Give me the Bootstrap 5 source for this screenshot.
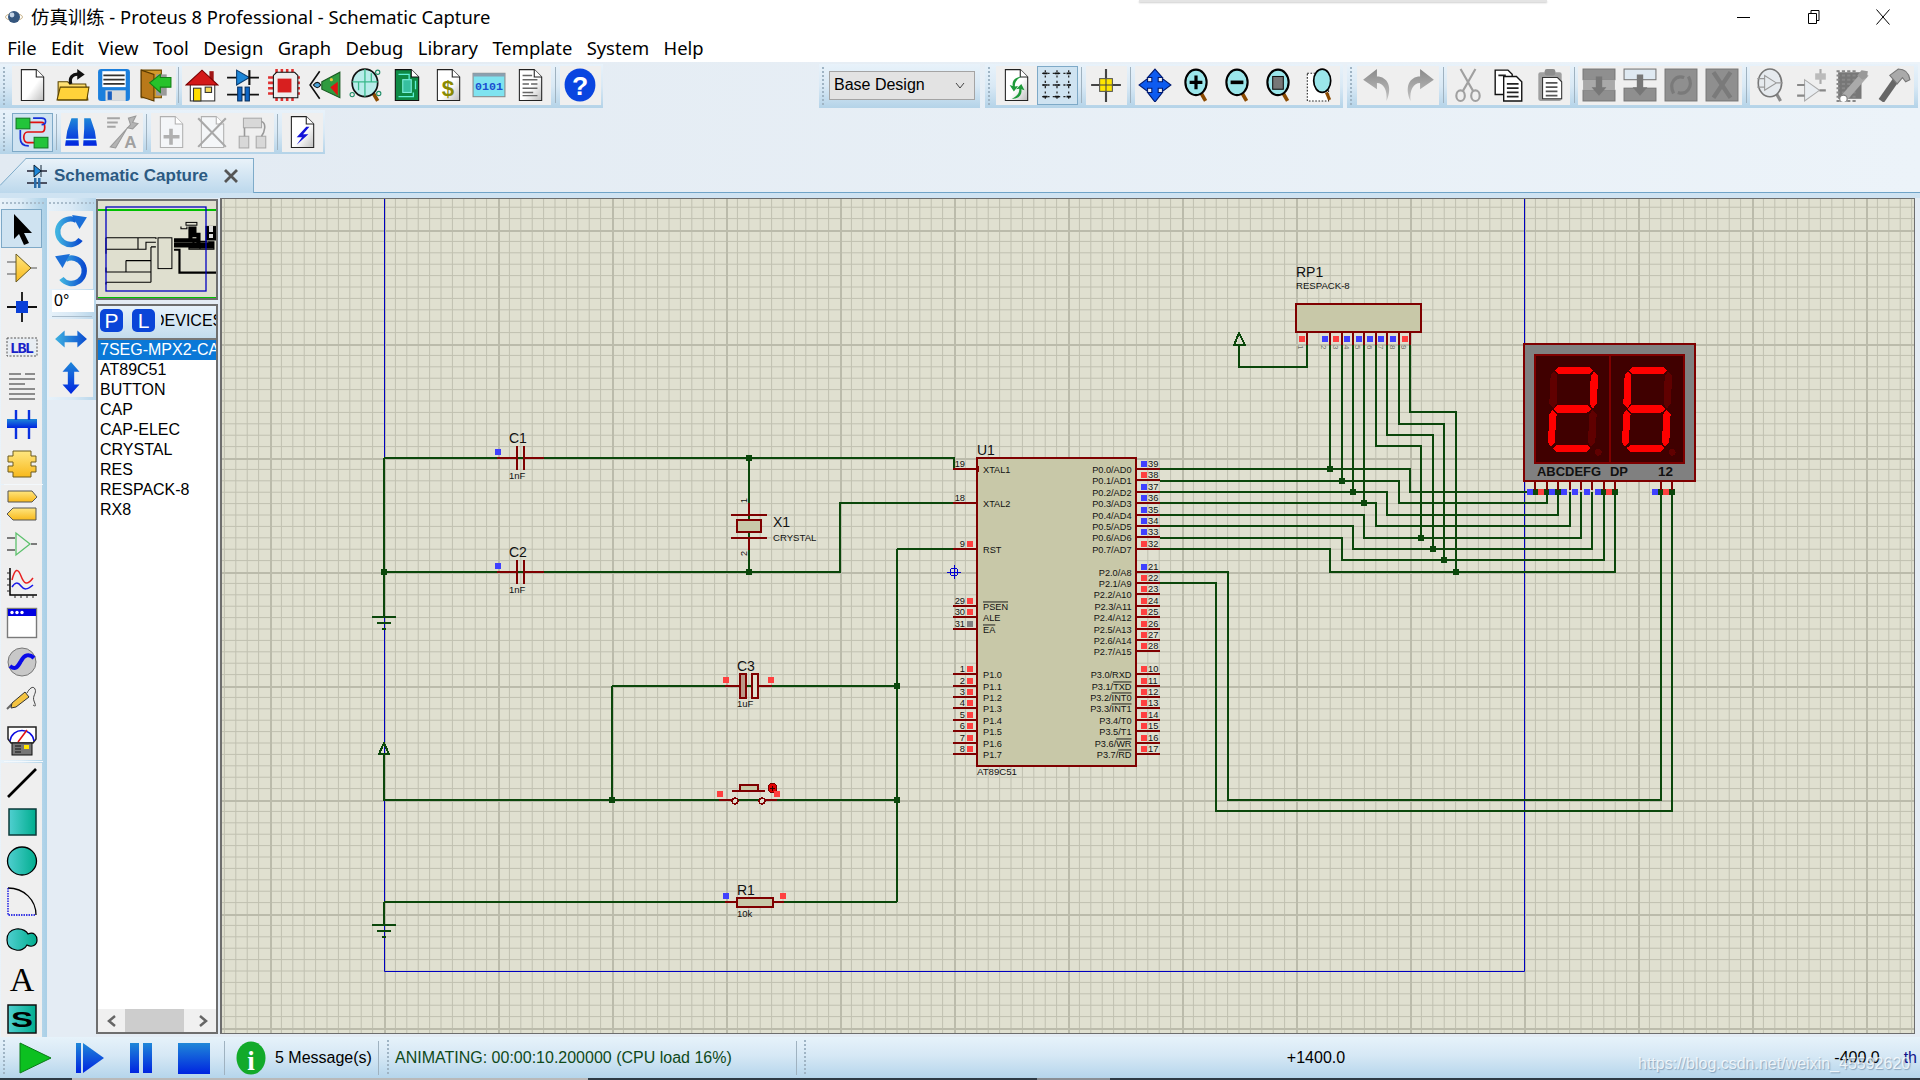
<!DOCTYPE html>
<html lang="en">
<head>
  <meta charset="utf-8" />
  <title>仿真训练 - Proteus 8 Professional - Schematic Capture</title>
  <link href="https://cdn.jsdelivr.net/npm/bootstrap@5.3.2/dist/css/bootstrap.min.css" rel="stylesheet" />
  <style>
    html, body { height: 100%; overflow: hidden; }
    body { font-family: "Liberation Sans", "Noto Sans CJK SC", sans-serif; font-size: 16px; color: #000; background: #e4ecf4; position: relative; }
    .gloss { position: absolute; width: 0; height: 0; }

    .title-bar { height: 34px; background: #fff; padding-left: 5px; }
    .title-text { font-family: "Noto Sans", "Noto Sans CJK SC", sans-serif; font-size: 18.4px; margin-left: 8px; white-space: nowrap; }
    .win-ctl { width: 70px; height: 34px; }
    .win-group { padding-right: 2px; }
    .top-shadow { position: absolute; left: 1139px; top: 0; width: 408px; height: 2px; background: #e4e4e4; box-shadow: 0 1px 2px #ccc; }

    .menu-bar { height: 28px; background: #fff; padding-left: 0; }
    .menu-bar .nav-link { font-family: "Noto Sans", sans-serif; font-size: 18.4px; color: #000; padding: 0 7.2px; line-height: 28px; }

    .bars { height: 136px; background: linear-gradient(90deg, #e2eaf2, #ecf3f9); }
    .bar-row-a { height: 48px; padding-top: 2px; }
    .bar-row-a .tbar { padding-bottom: 2px; }
    .bar-row-b { height: 44px; }
    .tbar { height: 44px; padding-left: 11.5px; position: relative; background: linear-gradient(#e8f2fa, #d9e9f5 50%, #b4d3e8); }
    .tbar::before { content: ""; position: absolute; left: 3px; top: 3px; bottom: 3px; width: 2px; background: repeating-linear-gradient(#9fb4c4 0 2px, transparent 2px 4px); }
    #tb1 { width: 603px; }
    #tb1 .tsep { width: 6px; }
    #tb1 .tsep:last-of-type { width: 9px; }
    #tb2 { width: 325px; }
    #tb3 { width: 161px; margin-left: 216px; padding-left: 10px; }
    #tb4 { width: 358px; margin-left: 5px; padding-left: 10.5px; }
    #tb5 { width: 571px; margin-left: 4px; padding-left: 10px; }
    .tool { width: 41px; height: 39px; padding: 0; border: 1px solid transparent; border-radius: 0; display: flex; align-items: center; justify-content: center; flex-shrink: 0; }
    .tool.on { background: #cfe3f1; border-color: #7ea9c7; }
    .tsep { width: 8px; height: 36px; display: flex; justify-content: center; }
    .tsep::after { content: ""; width: 1px; background: #9fb2c0; }
    .ic { width: 34px; height: 34px; display: block; }
    .layer-pick { width: 146px; height: 29px; background: #e3e3e3; border: 1px solid #a4a4a4; border-radius: 0; font-size: 16px; color: #000; padding: 0 26px 0 4px; --bs-form-select-bg-img: none; background-image: url("data:image/svg+xml,%3Csvg xmlns='http://www.w3.org/2000/svg' width='10' height='7'%3E%3Cpath d='M1 1l4 5 4-5' fill='none' stroke='%23444'/%3E%3C/svg%3E"); background-repeat: no-repeat; background-position: right 9px center; background-size: 10px 7px; }

    .tab-row { height: 44px; position: relative; }
    .tab-line { position: absolute; left: 0; right: 0; bottom: 0; height: 6px; background: #cfe3f2; border-top: 1px solid #6fa3c7; }
    .sheet-tab { position: absolute; left: 0; top: 4px; width: 254px; height: 35px; padding-left: 26px; background: linear-gradient(#e9f2f9, #bcd8ec); border-top: 1px solid #7eabc9; border-right: 1px solid #7eabc9; clip-path: polygon(26px 0, 100% 0, 100% 100%, 0 100%, 0 27px); }
    .tab-slant { position: absolute; left: 0; top: 4px; }
    .tab-name { font-weight: 700; font-size: 17px; color: #2c5a82; margin-left: 6px; white-space: nowrap; }

    .work { height: 839px; }
    .strip { width: 47px; background: linear-gradient(90deg, #e9f3fa, #dcebf6 45%, #a9cfe6); padding-top: 11px; position: relative; }
    .strip::before, .strip-two::before { content: ""; position: absolute; left: 2px; right: 2px; top: 4px; height: 2px; background: repeating-linear-gradient(90deg, #a9bccb 0 2px, transparent 2px 4px); }
    .strip .tool { width: 41px; height: 39.3px; margin-left: 1px; }
    .strip .ic { width: 32px; height: 32px; }
    .strip-sep { height: 1px; background: #f3f8fc; margin: 0 4px; }
    .strip-gap { margin: 1px 4px; }
    .strip-two { width: 49px; height: 202px; background: linear-gradient(90deg, #e7f2fa, #d9e9f5 50%, #b8d6ea); padding-top: 13px; position: relative; }
    .strip-two .tool { width: 44px; height: 39px; margin-left: 2px; }
    .angle { width: 42px; height: 22px; margin: 1px 0 4px 5px; background: #fff; line-height: 22px; padding-left: 2px; font-size: 16px; }
    .strip-two .strip-sep { background: #a9bccb; margin: 0 4px 2px 5px; }

    .dev-col { width: 122px; }
    .overview { height: 101px; border: 2px solid #6e6e6e; background: #dfdfcf; margin-top: 1px; overflow: hidden; }
    .overview svg { display: block; }
    .picker { height: 730px; margin-top: 4px; border: 2px solid #6e6e6e; background: #fff; }
    .picker-head { height: 32px; background: linear-gradient(#e7f2fa, #c3dced); padding: 3px 0 0 2px; overflow: hidden; }
    .pick-btn { width: 23px; height: 23px; padding: 0; flex-shrink: 0; background: #0a45d8; color: #fff; border: 0; border-radius: 5px; font-size: 21px; line-height: 23px; margin-right: 9px; --bs-btn-bg: #0a45d8; }
    .pick-clip { width: 56px; overflow: hidden; flex-shrink: 0; margin-left: -3px; }
    .pick-label { font-size: 16px; margin-left: -8px; white-space: nowrap; display: block; }
    .picker .list-group { --bs-list-group-border-width: 0; --bs-list-group-bg: transparent; border-top: 2px solid #777; border-radius: 0; }
    .picker .list-group-item { padding: 0 0 0 2px; height: 20px; line-height: 20px; font-size: 16px; color: #000; white-space: nowrap; overflow: hidden; background: transparent; }
    .picker .list-group-item.active { background: #0a78d7; color: #fff; }
    .hscroll { height: 23px; background: #f0f0f0; }
    .hscroll-thumb { width: 59px; height: 23px; background: #cdcdcd; }
    .hscroll-arrow { width: 27px; height: 23px; }

    .canvas-box { margin-left: 2px; width: 1695px; height: 836px; border: 2px solid #6e6e6e; border-right-width: 1px; border-top-width: 1px; }
    #sch { display: block; width: 1692px; height: 834px; font-family: "Liberation Sans", sans-serif; }
    #sch text { fill: #111; }
    #art { shape-rendering: crispEdges; }
    .ovl { text-decoration: overline; }

    .status { height: 41px; padding-top: 1px; background: linear-gradient(#e6f2fa, #d6e8f5 45%, #b5d5eb); position: relative; }
    .status-grip { width: 2px; height: 36px; background: repeating-linear-gradient(#9fb4c4 0 2px, transparent 2px 4px); flex-shrink: 0; }
    .grip-a { margin-left: 3px; }
    .grip-b { margin-left: 8px; }
    .grip-c { margin-left: 7px; }
    .run-btn { width: 52.5px; height: 40px; padding: 0; display: flex; align-items: center; justify-content: center; border: 0; }
    .run-first { margin-left: 5px; }
    .stat-sep { width: 1px; height: 34px; background: #9fb2c0; flex-shrink: 0; }
    .info-mark { margin-left: 11px; }
    .msg { width: 112px; padding-left: 9px; white-space: nowrap; }
    .anim { color: #0f4a1a; width: 407px; padding-left: 6px; white-space: nowrap; }
    .cell-x { width: 1020px; text-align: center; }
    .cell-y { width: 62px; text-align: center; }
    .cell-u { flex-grow: 1; color: #11118a; text-align: right; padding-right: 3px; }
    .water { position: absolute; left: 1638px; top: 15px; color: rgba(255, 255, 255, .78); text-shadow: 1px 1px 1px rgba(90, 120, 150, .55); white-space: nowrap; }
    .task-strip { height: 2px; background: linear-gradient(90deg, #2e3a44 72px, #b9b9b9 72px, #b9b9b9 588px, #2e3a44 588px, #2e3a44 1037px, #8a8f94 1037px, #8a8f94 1110px, #2e3a44 1110px); }
  </style>
</head>
<body>
  <svg class="gloss" aria-hidden="true">
    <defs>
      <linearGradient id="gPage" x1="0" y1="0" x2="1" y2="1"><stop offset=".55" stop-color="#fff"/><stop offset="1" stop-color="#bdbdbd"/></linearGradient>
      <linearGradient id="gGold" x1="0" y1="0" x2="0" y2="1"><stop offset="0" stop-color="#ffe680"/><stop offset="1" stop-color="#f8b91c"/></linearGradient>
      <linearGradient id="gBlue" x1="0" y1="0" x2="0" y2="1"><stop offset="0" stop-color="#1f87d8"/><stop offset="1" stop-color="#0024e0"/></linearGradient>
      <linearGradient id="gSky" x1="0" y1="0" x2="1" y2="0"><stop offset="0" stop-color="#3fb2e0"/><stop offset="1" stop-color="#0a4bd0"/></linearGradient>
      <linearGradient id="gTeal" x1="0" y1="0" x2="1" y2="0"><stop offset="0" stop-color="#50cfd0"/><stop offset="1" stop-color="#00ad8e"/></linearGradient>
      <linearGradient id="gGrey" x1="0" y1="0" x2="0" y2="1"><stop offset="0" stop-color="#8a8a8a"/><stop offset="1" stop-color="#c4c4c4"/></linearGradient>
      <symbol id="pg" viewBox="0 0 32 32"><path d="M6 1.5h14l7 7v22H6z" fill="url(#gPage)" stroke="#222"/><path d="M20 1.5v7h7" fill="#fff" stroke="#222"/></symbol>
      <symbol id="pgoff" viewBox="0 0 32 32"><path d="M6 1.5h14l7 7v22H6z" fill="#f4f6f8" stroke="#b0b0b0"/><path d="M20 1.5v7h7" fill="#fff" stroke="#b0b0b0"/></symbol>
      <symbol id="mg" viewBox="0 0 32 32"><path d="M21 24l4 7" stroke="#8a4a00" stroke-width="3.4"/><ellipse cx="16" cy="13.5" rx="10" ry="12" fill="#9be6ea" stroke="#000" stroke-width="2"/></symbol>
    </defs>
  </svg>

  <div class="top-shadow"></div>

  <header class="title-bar d-flex align-items-center">
    <svg width="18" height="20" viewBox="0 0 18 20"><ellipse cx="9" cy="10" rx="8.5" ry="3.5" fill="none" stroke="#c9b48a"/><circle cx="9" cy="10" r="6" fill="#35567e"/><circle cx="7" cy="8" r="2.4" fill="#c4d4e6"/></svg>
    <span class="title-text">仿真训练 - Proteus 8 Professional - Schematic Capture</span>
    <div class="ms-auto d-flex align-items-center win-group">
      <div class="win-ctl d-flex align-items-center justify-content-center"><svg width="16" height="16" viewBox="0 0 16 16"><path d="M2 8.5h13" stroke="#000"/></svg></div>
      <div class="win-ctl d-flex align-items-center justify-content-center"><svg width="16" height="16" viewBox="0 0 16 16"><path d="M3.5 4.500h8v10h-8zM6 4.500V1.500h8v10h-2.500" fill="none" stroke="#000"/></svg></div>
      <div class="win-ctl d-flex align-items-center justify-content-center"><svg width="16" height="16" viewBox="0 0 16 16"><path d="M1.500 .5l13 15M14.500 .5l-13 15" stroke="#000"/></svg></div>
    </div>
  </header>

  <nav class="menu-bar nav">
    <a class="nav-link" href="#">File</a>
    <a class="nav-link" href="#">Edit</a>
    <a class="nav-link" href="#">View</a>
    <a class="nav-link" href="#">Tool</a>
    <a class="nav-link" href="#">Design</a>
    <a class="nav-link" href="#">Graph</a>
    <a class="nav-link" href="#">Debug</a>
    <a class="nav-link" href="#">Library</a>
    <a class="nav-link" href="#">Template</a>
    <a class="nav-link" href="#">System</a>
    <a class="nav-link" href="#">Help</a>
  </nav>

  <div class="bars">
    <div class="bar-row-a d-flex">
      <div class="tbar d-flex align-items-center" id="tb1">
        <button class="tool"><svg class="ic" viewBox="0 0 32 32"><use href="#pg"/></svg></button>
        <button class="tool"><svg class="ic" viewBox="0 0 32 32"><path d="M2 13h9l2 2h15l2 15H2z" fill="url(#gGold)" stroke="#5a4300"/><path d="M1 30l3-12h27l-2 12z" fill="#ffd23a" stroke="#5a4300"/><path d="M14 15c-2-6 2-10 8-9" fill="none" stroke="#111" stroke-width="3"/><path d="M20 1l7 5-7 5z" fill="#111"/></svg></button>
        <button class="tool"><svg class="ic" viewBox="0 0 32 32"><rect x="1" y="1" width="30" height="30" rx="3" fill="#1b7fdd"/><rect x="5" y="3" width="22" height="15" fill="#fff"/><path d="M6 7h20M6 11h20M6 15h20" stroke="#333" stroke-width="1.6"/><rect x="8" y="21" width="19" height="10" fill="#dcdcdc"/><rect x="10" y="22" width="4" height="8" fill="#1b5fc0"/></svg></button>
        <button class="tool"><svg class="ic" viewBox="0 0 32 32"><path d="M3 2h19v26H3z" fill="#d39a2a" stroke="#6e4a00"/><path d="M3 2l12 4v25L3 27z" fill="#b9791a" stroke="#5a3a00"/><rect x="17" y="6" width="10" height="20" fill="#9a9a9a"/><path d="M31 9v9H21v5l-10-9 10-8v3z" fill="#26c22a" stroke="#128014"/></svg></button>
        <span class="tsep"></span>
        <button class="tool"><svg class="ic" viewBox="0 0 32 32"><rect x="5" y="14" width="23" height="17" fill="#fff" stroke="#333"/><rect x="23" y="3" width="4" height="9" fill="#a01515"/><path d="M1 16L16 2l15 14z" fill="#d41818" stroke="#7a0000"/><rect x="8" y="19" width="7" height="12" fill="#ffdd00" stroke="#333"/><rect x="19" y="18" width="6" height="5" fill="#f5d95a" stroke="#333"/></svg></button>
        <button class="tool"><svg class="ic" viewBox="0 0 32 32"><path d="M1 9h30M1 25h30" stroke="#111" stroke-width="1.6"/><path d="M10 2l12 7-12 7z" fill="#1c86d8" stroke="#0a3c70"/><path d="M22 2v14" stroke="#111" stroke-width="2"/><rect x="11" y="18" width="4" height="13" fill="#0f66c6" stroke="#063060"/><rect x="18" y="18" width="4" height="13" fill="#0f66c6" stroke="#063060"/></svg></button>
        <button class="tool"><svg class="ic" viewBox="0 0 32 32"><path d="M1 9h30M1 14h30M1 19h30M1 24h30M9 1v30M14 1v30M19 1v30M24 1v30" stroke="#e03030" stroke-width="2.400"/><path d="M9 4h17l3 3v21H6V7z" fill="#eee" stroke="#111"/><rect x="10" y="10" width="13" height="13" fill="#d81f1f"/></svg></button>
        <button class="tool"><svg class="ic" viewBox="0 0 32 32"><path d="M11 3L2 16l9 13" fill="none" stroke="#111" stroke-width="1.500"/><path d="M5 16q4-5 7 0q-3 5-7 0z" fill="#4ba3d8" stroke="#111"/><path d="M13 13L30 4v24L13 20z" fill="#2f9b3f" stroke="#1a5a22"/><path d="M21 18l7-5v13z" fill="#e01212"/><circle cx="22" cy="11" r="1.500" fill="#e8c33a"/></svg></button>
        <button class="tool"><svg class="ic" viewBox="0 0 32 32"><path d="M23 24l4 7" stroke="#8a4a00" stroke-width="3.4"/><ellipse cx="15" cy="14" rx="12" ry="13" fill="#b8ecea" stroke="#111" stroke-width="1.600"/><path d="M3 13h24M15 1v26M9 13v8M21 13v-8" stroke="#38b98a" stroke-width="1.200"/><circle cx="3" cy="25" r="2" fill="none" stroke="#1d8c66"/><circle cx="27" cy="4" r="2" fill="none" stroke="#1d8c66"/><circle cx="28" cy="24" r="2" fill="none" stroke="#1d8c66"/></svg></button>
        <button class="tool"><svg class="ic" viewBox="0 0 32 32"><path d="M5 1.500h15l7 7v22H5z" fill="#0e8a45" stroke="#111"/><path d="M20 1.500v7h7" fill="#fff" stroke="#111"/><rect x="12" y="11" width="8" height="12" fill="#37c0a0" stroke="#7ff0e0"/><path d="M8 6h10v5M8 27h14v-4M24 12v8" fill="none" stroke="#5ff0d8" stroke-width="1.200"/></svg></button>
        <button class="tool"><svg class="ic" viewBox="0 0 32 32"><use href="#pg"/><text x="16" y="26" text-anchor="middle" font-size="21" font-weight="700" font-family="Liberation Sans" fill="#8a8a00">$</text></svg></button>
        <button class="tool"><svg class="ic" viewBox="0 0 32 32"><rect x="1" y="5" width="30" height="22" fill="#7fe3f0" stroke="#8a8a8a"/><rect x="1" y="5" width="30" height="3" fill="#8aa0b0"/><text x="16" y="21" text-anchor="middle" font-size="11" font-weight="700" font-family="Liberation Mono" fill="#1a4fd0">0101</text></svg></button>
        <button class="tool"><svg class="ic" viewBox="0 0 32 32"><use href="#pg"/><path d="M9 7h9M9 11h14M9 15h6M17 15h6M9 19h14M9 23h10M9 26h14" stroke="#666" stroke-width="1.400"/></svg></button>
        <span class="tsep"></span>
        <button class="tool"><svg class="ic" viewBox="0 0 32 32"><ellipse cx="16" cy="16" rx="14.500" ry="15.500" fill="#0a45e0"/><text x="16" y="25" text-anchor="middle" font-size="25" font-weight="700" font-family="Liberation Sans" fill="#fff">?</text></svg></button>
      </div>
      <div class="tbar d-flex align-items-center" id="tb3">
        <select class="form-select layer-pick"><option>Base Design</option></select>
      </div>
      <div class="tbar d-flex align-items-center" id="tb4">
        <button class="tool"><svg class="ic" viewBox="0 0 32 32"><use href="#pg"/><path d="M21 8c-7 1-9 5-8 9l-3-1 4 6 4-5-3 .5c-.5-4 2-7 6-9.500z" fill="#1e9a3a"/><path d="M12 29c7 0 10-4 9-9l3 1-3-6-5 5 3-.5c.5 4-2 7-7 9.500z" fill="#1e9a3a"/></svg></button>
        <button class="tool on"><svg class="ic" viewBox="0 0 32 32"><path d="M2 5h28M2 16h28M2 27h28M5 2v28M16 2v28M27 2v28" stroke="#222" stroke-dasharray="2 3" stroke-width="1.200"/><path d="M3 5h4M14 5h4M25 5h4M3 16h4M14 16h4M25 16h4M3 27h4M14 27h4M25 27h4" stroke="#111" stroke-width="1.600"/></svg></button>
        <span class="tsep"></span>
        <button class="tool"><svg class="ic" viewBox="0 0 32 32"><path d="M16 1v31M2 16h28" stroke="#444" stroke-width="2"/><rect x="10" y="10" width="12" height="12" fill="#ffe600" stroke="#555"/><path d="M16 10v12M10 16h12" stroke="#444"/></svg></button>
        <span class="tsep"></span>
        <button class="tool"><svg class="ic" viewBox="0 0 32 32"><path d="M16 1l7 8h-4v4h4v-3l8 6-8 6v-3h-4v4h4l-7 9-7-9h4v-4H9v3l-8-6 8-6v3h4V9H9z" fill="#0d5bf0" stroke="#001a70"/></svg></button>
        <button class="tool"><svg class="ic" viewBox="0 0 32 32"><use href="#mg"/><path d="M16 7v13M10 13.500h12" stroke="#000" stroke-width="3"/></svg></button>
        <button class="tool"><svg class="ic" viewBox="0 0 32 32"><use href="#mg"/><path d="M10 13.500h12" stroke="#000" stroke-width="3.400"/></svg></button>
        <button class="tool"><svg class="ic" viewBox="0 0 32 32"><use href="#mg"/><rect x="11" y="8" width="10" height="12" fill="#777" stroke="#111"/></svg></button>
        <button class="tool"><svg class="ic" viewBox="0 0 32 32"><rect x="5" y="5" width="20" height="26" fill="#fff" stroke="#222" stroke-dasharray="1.500 1.500"/><path d="M23 23l3 7" stroke="#8a4a00" stroke-width="3"/><ellipse cx="19" cy="12" rx="8" ry="11" fill="#9be6ea" stroke="#000" stroke-width="1.600"/></svg></button>
      </div>
      <div class="tbar d-flex align-items-center" id="tb5">
        <button class="tool"><svg class="ic" viewBox="0 0 32 32"><path d="M24 31C30 18 25 8 15 8V1L2 11l13 9v-6c6 0 10 6 9 17z" fill="url(#gGrey)"/></svg></button>
        <button class="tool"><svg class="ic" viewBox="0 0 32 32"><path d="M8 31C2 18 7 8 17 8V1l13 10-13 9v-6c-6 0-10 6-9 17z" fill="url(#gGrey)"/></svg></button>
        <span class="tsep"></span>
        <button class="tool"><svg class="ic" viewBox="0 0 32 32"><path d="M9 1l12 21M23 1L11 22" stroke="#a0a0a0" stroke-width="2"/><ellipse cx="9" cy="26" rx="4" ry="5" fill="none" stroke="#a0a0a0" stroke-width="2"/><ellipse cx="23" cy="26" rx="4" ry="5" fill="none" stroke="#a0a0a0" stroke-width="2"/></svg></button>
        <button class="tool"><svg class="ic" viewBox="0 0 32 32"><path d="M3 2h12l4 4v19H3z" fill="#fff" stroke="#111" stroke-width="1.300"/><path d="M11 8h12l5 5v18H11z" fill="#fff" stroke="#111" stroke-width="1.300"/><path d="M6 7h7M14 15h11M14 19h11M14 23h11M14 27h11" stroke="#222" stroke-width="1.600"/></svg></button>
        <button class="tool"><svg class="ic" viewBox="0 0 32 32"><rect x="5" y="4" width="22" height="27" rx="2" fill="#a0a0a0"/><rect x="11" y="1" width="10" height="6" rx="2" fill="#8c8c8c"/><path d="M9 9h14l4 4v16H9z" fill="#fff" stroke="#333"/><path d="M12 14h11M12 18h11M12 22h11M12 26h11" stroke="#555" stroke-width="1.600"/></svg></button>
        <span class="tsep"></span>
        <button class="tool"><svg class="ic" viewBox="0 0 32 32"><rect x="1" y="1" width="30" height="10" fill="#8f8f8f" stroke="#777"/><rect x="1" y="21" width="30" height="10" fill="#8f8f8f" stroke="#777"/><rect x="1" y="11" width="30" height="10" fill="#a9a9a9"/><path d="M13 8h6v10h4l-7 8-7-8h4z" fill="#777"/></svg></button>
        <button class="tool"><svg class="ic" viewBox="0 0 32 32"><rect x="1" y="1" width="30" height="10" fill="#dfe9f1" stroke="#777"/><rect x="1" y="19" width="30" height="12" fill="#8f8f8f" stroke="#777"/><path d="M13 6h6v12h4l-7 8-7-8h4z" fill="#777"/></svg></button>
        <button class="tool"><svg class="ic" viewBox="0 0 32 32"><rect x="1" y="1" width="30" height="30" fill="#8f8f8f" stroke="#777"/><path d="M9 24c-5-10 2-18 10-15M23 8c5 10-2 18-10 15" fill="none" stroke="#7a7a7a" stroke-width="3"/></svg></button>
        <button class="tool"><svg class="ic" viewBox="0 0 32 32"><rect x="1" y="1" width="30" height="30" fill="#8f8f8f" stroke="#777"/><path d="M8 4l16 24M24 4L8 28" stroke="#7a7a7a" stroke-width="4"/></svg></button>
        <span class="tsep"></span>
        <button class="tool"><svg class="ic" viewBox="0 0 32 32"><path d="M21 24l4 7" stroke="#8a8a8a" stroke-width="3"/><ellipse cx="15" cy="14" rx="11" ry="13" fill="#e6eaee" stroke="#777" stroke-width="1.500"/><path d="M10 7v14l11-7zM3 10h7M3 18h7M21 14h6" fill="none" stroke="#999"/></svg></button>
        <button class="tool"><svg class="ic" viewBox="0 0 32 32"><path d="M9 11v20l14-10z" fill="#e9edf1" stroke="#aaa"/><path d="M2 16h7M2 26h7M23 21h6" stroke="#888" stroke-width="2"/><path d="M24 1v14" stroke="#aaa" stroke-width="2"/><rect x="19" y="5" width="10" height="6" fill="#bbb"/></svg></button>
        <button class="tool"><svg class="ic" viewBox="0 0 32 32"><path d="M2 4h22v25H2z" fill="#777"/><path d="M2 2v30M7 2v30M12 2v30M17 2v30" stroke="#888" stroke-dasharray="2 2" stroke-width="3"/><path d="M6 30L28 5" stroke="#aaa" stroke-width="7"/><circle cx="7" cy="29" r="3.500" fill="#fff" stroke="#777"/><path d="M24 2l6 1-1 6-4 2-5-4z" fill="#999"/></svg></button>
        <button class="tool"><svg class="ic" viewBox="0 0 32 32"><path d="M4 31l14-20" stroke="#666" stroke-width="6"/><path d="M12 7L20 1c6 0 10 4 11 10l-4 2-3-4-5 6z" fill="#aaa" stroke="#777"/></svg></button>
      </div>
    </div>
    <div class="bar-row-b d-flex">
      <div class="tbar d-flex align-items-center" id="tb2">
        <button class="tool on"><svg class="ic" viewBox="0 0 32 32"><path d="M9 10h14c4 0 4 9 0 9H10c-5 0-5 10 0 10h6" fill="none" stroke="#e01010" stroke-width="1.600" transform="translate(2 -3)"/><path d="M5 14v8c0 6 4 7 8 7M17 3h8c5 0 5 6 0 6" fill="none" stroke="#1530d8" stroke-width="1.600"/><rect x="1" y="3" width="13" height="10" fill="#22c43a" stroke="#127a22"/><rect x="18" y="21" width="13" height="10" fill="#22c43a" stroke="#127a22"/></svg></button>
        <span class="tsep"></span>
        <button class="tool"><svg class="ic" viewBox="0 0 32 32"><path d="M7 3h6v10l1 16H1l2-14zM19 3h6l4 12 2 14H18l1-16z" fill="url(#gBlue)"/><path d="M1 23h13M18 23h13" stroke="#dff" stroke-width="1.500"/></svg></button>
        <button class="tool"><svg class="ic" viewBox="0 0 32 32"><path d="M2 3h12M2 7h10M2 11h8" stroke="#a5a5a5" stroke-width="2"/><path d="M5 30L24 9l-2-6 7-2-3 6 5 1-5 5-5-1L10 31z" fill="#b4b4b4" stroke="#9a9a9a"/><text x="24" y="31" text-anchor="middle" font-size="16" font-weight="700" font-family="Liberation Sans" fill="#a0a0a0">A</text></svg></button>
        <span class="tsep"></span>
        <button class="tool"><svg class="ic" viewBox="0 0 32 32"><use href="#pgoff"/><path d="M16 13v15M9 20.500h15" stroke="#b0b0b0" stroke-width="3.400"/></svg></button>
        <button class="tool"><svg class="ic" viewBox="0 0 32 32"><use href="#pgoff"/><path d="M3 3l26 27M29 3L3 30" stroke="#a8a8a8" stroke-width="2"/></svg></button>
        <button class="tool"><svg class="ic" viewBox="0 0 32 32"><rect x="7" y="3" width="17" height="9" fill="#d8d8d8" stroke="#aaa"/><rect x="3" y="20" width="9" height="11" fill="#d8d8d8" stroke="#aaa"/><rect x="19" y="20" width="9" height="11" fill="#d8d8d8" stroke="#aaa"/><path d="M8 12v8M24 6c5 2 3 10 0 14" fill="none" stroke="#999" stroke-width="1.500"/></svg></button>
        <span class="tsep"></span>
        <button class="tool"><svg class="ic" viewBox="0 0 32 32"><use href="#pg"/><path d="M20 11l-9 10h5l-5 7 11-10h-5l6-7z" fill="#1212d8"/></svg></button>
      </div>
    </div>
    <div class="tab-row">
      <div class="tab-line"></div>
      <div class="sheet-tab d-flex align-items-center">
        <svg width="22" height="24" viewBox="0 0 22 24"><path d="M1 7h20M1 19h20" stroke="#223" stroke-width="1.300"/><path d="M8 1l7 6-7 6z" fill="#1c86d8" stroke="#123"/><path d="M15 1v12" stroke="#123"/><rect x="8" y="14" width="2.500" height="10" fill="#2a6ca8"/><rect x="12" y="14" width="2.500" height="10" fill="#2a6ca8"/></svg>
        <span class="tab-name">Schematic Capture</span>
        <svg width="14" height="14" viewBox="0 0 14 14" class="ms-3"><path d="M1 1l12 12M13 1L1 13" stroke="#555" stroke-width="2.800"/></svg>
      </div>
      <svg class="tab-slant" width="28" height="30"><path d="M0 27.500L26 .5" stroke="#7eabc9"/></svg>
    </div>
  </div>

  <main class="work d-flex">
    <aside class="strip flex-shrink-0">
      <button class="tool on"><svg class="ic" viewBox="0 0 32 32"><path d="M8 1l18 19h-8l5 10-5 2-5-11-5 5z" fill="#000"/></svg></button>
      <button class="tool"><svg class="ic" viewBox="0 0 32 32"><path d="M1 10h9M1 22h9M24 16h7" stroke="#888" stroke-width="1.500"/><path d="M10 2v28l15-14z" fill="url(#gGold)" stroke="#6a5a20"/></svg></button>
      <button class="tool"><svg class="ic" viewBox="0 0 32 32"><path d="M16 1v30M1 16h30" stroke="#111" stroke-width="1.800"/><rect x="10" y="10" width="12" height="12" fill="#0a40d8"/></svg></button>
      <button class="tool"><svg class="ic" viewBox="0 0 32 32"><rect x="1" y="7" width="30" height="18" fill="#e8edf2" stroke="#555" stroke-dasharray="2 1.500"/><text x="16" y="21.500" text-anchor="middle" font-size="15" font-weight="700" font-family="Liberation Mono" fill="#1a22c8" textLength="24">LBL</text></svg></button>
      <button class="tool"><svg class="ic" viewBox="0 0 32 32"><path d="M3 4h12M19 4h10M3 9h26M3 14h16M3 19h26M3 24h26M3 29h26" stroke="#6c6c6c" stroke-width="1.700"/></svg></button>
      <button class="tool"><svg class="ic" viewBox="0 0 32 32"><rect x="1" y="10" width="30" height="9" fill="url(#gBlue)"/><path d="M10 1v10M23 1v10M10 18v12M23 18v12" stroke="#0830e0" stroke-width="2.400"/></svg></button>
      <button class="tool"><svg class="ic" viewBox="0 0 32 32"><path d="M7 3h18v5h5v6h-5v4h5v6h-5v5H7v-5H2v-6h5v-4H2V8h5z" fill="url(#gGold)" stroke="#6a5a20"/></svg></button>
      <div class="strip-sep"></div>
      <button class="tool"><svg class="ic" viewBox="0 0 32 32"><path d="M2 2h24l5 6-5 5H2z" fill="url(#gGold)" stroke="#555"/><path d="M30 19H7l-6 6 6 6h23z" fill="url(#gGold)" stroke="#555"/></svg></button>
      <button class="tool"><svg class="ic" viewBox="0 0 32 32"><path d="M1 10h8M1 22h8M25 16h6" stroke="#555" stroke-width="1.500"/><path d="M10 5v22l14-11z" fill="none" stroke="#5cc06c" stroke-width="1.300"/></svg></button>
      <button class="tool"><svg class="ic" viewBox="0 0 32 32"><path d="M4 1v27h27" fill="none" stroke="#000" stroke-width="1.500"/><path d="M6 13c3-12 6-12 9-4s6 10 12 2" fill="none" stroke="#e82020" stroke-width="1.500"/><path d="M6 20c3-5 6-5 9-1s6 4 12-1" fill="none" stroke="#1616e8" stroke-width="1.500"/><path d="M1 6h3M1 12h3M1 18h3M1 24h3M9 28v3M15 28v3M21 28v3M27 28v3" stroke="#222"/></svg></button>
      <button class="tool"><svg class="ic" viewBox="0 0 32 32"><rect x="1.500" y="1.500" width="29" height="29" fill="#fff" stroke="#7a7a7a" stroke-width="1.400"/><rect x="2" y="2" width="28" height="7" fill="#0000e0"/><circle cx="6" cy="5.500" r="1.700" fill="#fff"/><circle cx="11" cy="5.500" r="1.700" fill="#fff"/><circle cx="16" cy="5.500" r="1.700" fill="#fff"/></svg></button>
      <button class="tool"><svg class="ic" viewBox="0 0 32 32"><circle cx="16" cy="16" r="14" fill="#c8c8c8" stroke="#777"/><path d="M4 20c6 5 8 0 11-5 3-6 8-8 13-3" fill="none" stroke="#0a0ae8" stroke-width="4"/></svg></button>
      <button class="tool"><svg class="ic" viewBox="0 0 32 32"><path d="M1 24l5-5" stroke="#666" stroke-width="2"/><path d="M6 18L19 7l4 5-13 10-5 1z" fill="#f4c442" stroke="#333"/><path d="M21 8c2-4 6-8 8-4s-3 7-1 12 2 6-1 4" fill="none" stroke="#444"/></svg></button>
      <button class="tool"><svg class="ic" viewBox="0 0 32 32"><path d="M2 2h28v12l-3 4H5l-3-4z" fill="#fff" stroke="#222" stroke-width="1.500"/><path d="M4 16c2-14 22-14 24 0" fill="none" stroke="#0a0ae0" stroke-width="1.500"/><path d="M12 17l9-12" stroke="#e01010" stroke-width="1.500"/><rect x="6" y="18" width="20" height="12" fill="#777" stroke="#111"/><rect x="18" y="20" width="5" height="4" fill="#ffe600"/><path d="M9 21h6M9 24h6M9 27h6" stroke="#111"/></svg></button>
      <div class="strip-sep strip-gap"></div>
      <button class="tool"><svg class="ic" viewBox="0 0 32 32"><path d="M2 30L30 2" stroke="#000" stroke-width="2.600"/></svg></button>
      <button class="tool"><svg class="ic" viewBox="0 0 32 32"><rect x="3" y="3" width="27" height="26" fill="url(#gTeal)" stroke="#0b3a3a" stroke-width="1.500"/></svg></button>
      <button class="tool"><svg class="ic" viewBox="0 0 32 32"><ellipse cx="16" cy="16" rx="14.500" ry="14" fill="url(#gTeal)" stroke="#000" stroke-width="1.300"/></svg></button>
      <button class="tool"><svg class="ic" viewBox="0 0 32 32"><path d="M2 3c16 0 28 12 28 27" fill="none" stroke="#000" stroke-width="1.300"/><path d="M2 3v27h28" fill="none" stroke="#0000e0" stroke-dasharray="1.500 1" stroke-width="1.300"/></svg></button>
      <button class="tool"><svg class="ic" viewBox="0 0 32 32"><path d="M10 5c7-1 11 3 12 5 6-3 9 2 9 6 0 5-5 8-10 5-2 4-7 6-11 5C3 25 1 21 1 16 1 10 4 6 10 5z" fill="url(#gTeal)" stroke="#000" stroke-width="1.200"/></svg></button>
      <button class="tool"><svg class="ic" viewBox="0 0 32 32"><text x="16" y="28" text-anchor="middle" font-size="34" font-family="Liberation Serif" fill="#000">A</text></svg></button>
      <button class="tool"><svg class="ic" viewBox="0 0 32 32"><rect x="2" y="2" width="28" height="28" fill="url(#gTeal)" stroke="#111" stroke-width="1.500"/><text x="16" y="24" text-anchor="middle" font-size="22" font-weight="700" font-family="Liberation Sans" fill="#000" textLength="22" lengthAdjust="spacingAndGlyphs">S</text></svg></button>
    </aside>

    <aside class="strip-two flex-shrink-0">
      <button class="tool"><svg class="ic" viewBox="0 0 32 32"><path d="M25 24a12 12 0 1 1-4-18" fill="none" stroke="url(#gSky)" stroke-width="5"/><path d="M17 1l14 2-7 11z" fill="#1b6fd8"/></svg></button>
      <button class="tool"><svg class="ic" viewBox="0 0 32 32"><path d="M7 24a12 12 0 1 0 4-18" fill="none" stroke="url(#gSky)" stroke-width="5"/><path d="M15 1L1 3l7 11z" fill="#1b6fd8"/></svg></button>
      <div class="angle">0°</div>
      <div class="strip-sep"></div>
      <button class="tool"><svg class="ic" viewBox="0 0 32 32"><path d="M1 16l9-8v5h12V8l9 8-9 8v-5H10v5z" fill="url(#gSky)"/></svg></button>
      <button class="tool"><svg class="ic" viewBox="0 0 32 32"><path d="M16 1l8 9h-5v12h5l-8 9-8-9h5V10H8z" fill="url(#gBlue)"/></svg></button>
    </aside>

    <section class="dev-col flex-shrink-0">
      <div class="overview"><svg id="mini" width="118" height="97" viewBox="98 201 118 97"></svg></div>
      <div class="picker d-flex flex-column">
        <div class="picker-head d-flex align-items-start flex-shrink-0">
          <button class="btn pick-btn">P</button>
          <button class="btn pick-btn">L</button>
          <div class="pick-clip"><span class="pick-label">DEVICES</span></div>
        </div>
        <ul class="list-group flex-grow-1">
          <li class="list-group-item active">7SEG-MPX2-CA</li>
          <li class="list-group-item">AT89C51</li>
          <li class="list-group-item">BUTTON</li>
          <li class="list-group-item">CAP</li>
          <li class="list-group-item">CAP-ELEC</li>
          <li class="list-group-item">CRYSTAL</li>
          <li class="list-group-item">RES</li>
          <li class="list-group-item">RESPACK-8</li>
          <li class="list-group-item">RX8</li>
        </ul>
        <div class="hscroll d-flex flex-shrink-0">
          <div class="hscroll-arrow d-flex align-items-center justify-content-center"><svg width="10" height="12" viewBox="0 0 10 12"><path d="M8 1L2 6l6 5" fill="none" stroke="#666" stroke-width="2.500"/></svg></div>
          <div class="hscroll-thumb"></div>
          <div class="hscroll-arrow d-flex align-items-center justify-content-center ms-auto"><svg width="10" height="12" viewBox="0 0 10 12"><path d="M2 1l6 5-6 5" fill="none" stroke="#666" stroke-width="2.500"/></svg></div>
        </div>
      </div>
    </section>

    <section class="canvas-box flex-shrink-0">
      <svg id="sch" viewBox="222 199 1692 834">
        <defs>
          <pattern id="dots" x="384" y="344" width="114" height="114" patternUnits="userSpaceOnUse">
            <path id="minor" fill="none" stroke="#c0c0b0" stroke-width="1"/>
            <path d="M0 0H114M0 0V114" stroke="#bbbbab" stroke-width="4" fill="none"/>
          </pattern>
        </defs>
        <rect x="222" y="199" width="1692" height="834" fill="#e0e0d0"/>
        <rect x="222" y="199" width="1692" height="834" fill="url(#dots)"/>
        <path d="M384.500 199V971.500H1524.500V199" fill="none" stroke="#0000c0" stroke-width="1"/>
        <g id="art"></g>
      </svg>
    </section>
  </main>

  <footer>
    <div class="status d-flex align-items-center">
      <span class="status-grip grip-a"></span>
      <button class="run-btn bg-transparent run-first"><svg width="34" height="32" viewBox="0 0 34 32"><path d="M1 1l31 15L1 31z" fill="#0cc020" stroke="#0a7a18"/></svg></button>
      <button class="run-btn bg-transparent"><svg width="34" height="32" viewBox="0 0 34 32"><rect x="4" y="1" width="5" height="30" fill="url(#gBlue)"/><path d="M11 1l21 15-21 15z" fill="url(#gBlue)"/></svg></button>
      <button class="run-btn bg-transparent"><svg width="34" height="32" viewBox="0 0 34 32"><rect x="6" y="1" width="9" height="30" fill="url(#gBlue)"/><rect x="19" y="1" width="9" height="30" fill="url(#gBlue)"/></svg></button>
      <button class="run-btn bg-transparent"><svg width="34" height="32" viewBox="0 0 34 32"><rect x="1" y="1" width="32" height="31" fill="url(#gBlue)"/></svg></button>
      <span class="stat-sep ms-1"></span>
      <svg class="info-mark" width="30" height="34" viewBox="0 0 30 34"><ellipse cx="15" cy="17" rx="14.500" ry="16.500" fill="#12aa2a"/><text x="15" y="29" text-anchor="middle" font-size="27" font-weight="700" font-family="Liberation Serif" fill="#fff">i</text></svg>
      <span class="msg">5 Message(s)</span>
      <span class="stat-sep"></span>
      <span class="status-grip grip-b"></span>
      <span class="anim">ANIMATING: 00:00:10.200000 (CPU load 16%)</span>
      <span class="stat-sep"></span>
      <span class="status-grip grip-c"></span>
      <span class="cell-x">+1400.0</span>
      <span class="cell-y">-400.0</span>
      <span class="cell-u">th</span>
      <span class="water">https://blog.csdn.net/weixin_45592620</span>
    </div>
    <div class="task-strip"></div>
  </footer>

  <script>
    // grid lines inside one major cell
    let minorPath = '';
    for (let i = 1; i < 10; i++) minorPath += `M${(i * 11.4).toFixed(1)} 0V114M0 ${(i * 11.4).toFixed(1)}H114`;
    document.getElementById('minor').setAttribute('d', minorPath);

    const GREEN = '#0b470b', RED = '#7f0000';
    const BLUE_SQ = '#4040ff', RED_SQ = '#ff4040', GREY_SQ = '#808080';

    const wires = [
      'M384 458H954V469', 'M384 458V617', 'M384 572H840V503H953', 'M749 458V572',
      'M384 754V800H897', 'M612 686V800', 'M612 686H897', 'M897 549V902', 'M897 549H953',
      'M384 902H897', 'M384 902V925',
      'M1307 345V367H1239V345',
      'M1330 345V469', 'M1342 345V481', 'M1353 345V492', 'M1364 345V503',
      'M1376 345V446H1421V538', 'M1387 345V435H1433V549', 'M1399 345V424H1444V560', 'M1410 345V412H1456V572',
      'M1160 572H1228V800H1661V492', 'M1160 583H1216V811H1672V492'
    ];
    [[469, 1410, 492, 1535], [481, 1399, 503, 1547], [492, 1387, 515, 1558], [503, 1376, 526, 1570],
     [515, 1364, 538, 1581], [526, 1353, 549, 1592], [538, 1342, 560, 1604], [549, 1330, 572, 1615]]
      .forEach(([y, x, y2, x2]) => wires.push(`M1160 ${y}H${x}V${y2}H${x2}V492`));

    const junctions = [[749, 458], [749, 572], [384, 572], [612, 800], [897, 686], [897, 800],
      [1330, 469], [1342, 481], [1353, 492], [1364, 503], [1421, 538], [1433, 549], [1444, 560], [1456, 572],
      [1535, 492], [1547, 492], [1558, 492], [1604, 492], [1615, 492], [1661, 492], [1672, 492]];

    const txt = (x, y, s, size, anchor) => `<text x="${x}" y="${y}" font-size="${size}"${anchor ? ` text-anchor="${anchor}"` : ''}>${s}</text>`;
    const sq = (x, y, c) => `<rect x="${x - 3}" y="${y - 3}" width="6" height="6" fill="${c}"/>`;
    const red = d => `<path d="${d}" fill="none" stroke="${RED}" stroke-width="2"/>`;
    const ov = s => `<tspan class="ovl">${s}</tspan>`;

    let art = `<path d="${wires.join('')}" fill="none" stroke="${GREEN}" stroke-width="2"/>`;
    junctions.forEach(([x, y]) => art += `<rect x="${x - 3}" y="${y - 3}" width="6" height="6" fill="${GREEN}"/>`);

    // ground and power terminals
    const gnd = y => `<path d="M372 ${y}H396M377 ${y + 6}H391M382 ${y + 12}H386" stroke="${GREEN}" stroke-width="2"/>`;
    art += gnd(617) + gnd(925);
    art += `<path d="M384 743l-5 11h10z" fill="none" stroke="${GREEN}" stroke-width="2"/>`;
    art += `<path d="M1239 333l-5 12h11z" fill="none" stroke="${GREEN}" stroke-width="2"/>`;

    // capacitors, crystal, button, resistor
    [458, 572].forEach((y, i) => {
      art += red(`M497 ${y}H516M517 ${y - 12}V${y + 12}M524 ${y - 12}V${y + 12}M525 ${y}H544`);
      art += sq(498, y - 6, BLUE_SQ) + txt(509, y - 15, 'C' + (i + 1), 14) + txt(509, y + 21, '1nF', 9.5);
    });
    art += red('M749 503V515M731 515H767M731 538H767M749 538V550');
    art += `<rect x="737" y="520" width="24" height="12" fill="#c8c8a8" stroke="${RED}" stroke-width="2"/>`;
    art += txt(773, 527, 'X1', 14) + txt(773, 541, 'CRYSTAL', 9.600);
    art += `<text font-size="9" transform="translate(747 503) rotate(-90)">1</text><text font-size="9" transform="translate(747 556) rotate(-90)">2</text>`;

    art += red('M725 686H740M758 686H772');
    art += `<rect x="740" y="674" width="6" height="24" fill="#b98" stroke="${RED}" stroke-width="2"/><rect x="752" y="674" width="6" height="24" fill="#e0e0d0" stroke="${RED}" stroke-width="2"/>`;
    art += sq(726, 680, RED_SQ) + sq(771, 680, RED_SQ) + txt(737, 671, 'C3', 14) + txt(737, 707, '1uF', 9.5);

    art += red('M719 800H732M765 800H777M732 791H765');
    art += `<rect x="740" y="785" width="18" height="6" fill="#c8c8a8" stroke="${RED}" stroke-width="1.600"/><circle cx="735" cy="801" r="2.800" fill="#e0e0d0" stroke="${RED}" stroke-width="1.600"/><circle cx="762" cy="801" r="2.800" fill="#e0e0d0" stroke="${RED}" stroke-width="1.600"/>`;
    art += `<circle cx="772.500" cy="788" r="4.500" fill="#e00000" stroke="#700"/><path d="M770 788h5M772.500 785.500v5" stroke="#300"/>`;
    art += sq(720, 794, RED_SQ) + sq(777, 794, RED_SQ);

    art += red('M725 902H737M773 902H784');
    art += `<rect x="737" y="898" width="36" height="9" fill="#c8c8a8" stroke="${RED}" stroke-width="2"/>`;
    art += sq(726, 896, BLUE_SQ) + sq(783, 896, RED_SQ) + txt(737, 895, 'R1', 14) + txt(737, 917, '10k', 9.5);

    // AT89C51
    art += `<rect x="977" y="458" width="159" height="308" fill="#c8c8a8" stroke="${RED}" stroke-width="2"/>`;
    art += txt(977, 455, 'U1', 14) + txt(977, 775, 'AT89C51', 9.600);
    art += `<path d="M975 469l3-2v4z" fill="${RED}" stroke="${RED}"/>`;
    const leftPins = [
      [19, 469, 'XTAL1', null], [18, 503, 'XTAL2', null], [9, 549, 'RST', RED_SQ],
      [29, 606, ov('PSEN'), RED_SQ], [30, 617, 'ALE', RED_SQ], [31, 629, ov('EA'), GREY_SQ]
    ];
    for (let i = 0; i < 8; i++) leftPins.push([i + 1, Math.round(674.2 + i * 11.4), 'P1.' + i, RED_SQ]);
    leftPins.forEach(([n, y, name, c]) => {
      art += red(`M953 ${y}H977`) + txt(965, y - 2, n, 9.3, 'end') + txt(983, y + 3.5, name, 9.200);
      if (c) art += sq(969.500, y - 5.500, c);
    });
    const rightPins = [];
    ['AD0', 'AD1', 'AD2', 'AD3', 'AD4', 'AD5', 'AD6', 'AD7'].forEach((a, i) => rightPins.push([39 - i, Math.round(469 + i * 11.4), `P0.${i}/${a}`, [1, 7].includes(i) ? RED_SQ : BLUE_SQ]));
    ['A8', 'A9', 'A10', 'A11', 'A12', 'A13', 'A14', 'A15'].forEach((a, i) => rightPins.push([21 + i, Math.round(571.6 + i * 11.4), `P2.${i}/${a}`, i ? RED_SQ : BLUE_SQ]));
    ['RXD', ov('TXD'), ov('INT0'), ov('INT1'), 'T0', 'T1', ov('WR'), ov('RD')].forEach((a, i) => rightPins.push([10 + i, Math.round(674.2 + i * 11.4), `P3.${i}/${a}`, RED_SQ]));
    rightPins.forEach(([n, y, name, c]) => {
      art += red(`M1136 ${y}H1160`) + txt(1148, y - 2, n, 9.3) + txt(1131.500, y + 3.5, name, 9.200, 'end') + sq(1144, y - 5.500, c);
    });

    // RESPACK-8
    art += `<rect x="1296" y="304" width="125" height="28" fill="#c8c8a8" stroke="${RED}" stroke-width="2"/>`;
    art += txt(1296, 277, 'RP1', 14) + txt(1296, 289, 'RESPACK-8', 9.600);
    [1307, 1330, 1342, 1353, 1364, 1376, 1387, 1399, 1410].forEach((x, i) => {
      art += red(`M${x} 332V345`) + `<text font-size="8" fill-opacity=".6" transform="translate(${x - 9} 345) rotate(90)">${i + 1}</text>`;
    });
    [[1302, RED_SQ], [1325, BLUE_SQ], [1336, RED_SQ], [1347, BLUE_SQ], [1359, BLUE_SQ], [1370, BLUE_SQ], [1381, BLUE_SQ], [1393, BLUE_SQ], [1405, RED_SQ]]
      .forEach(([x, c]) => art += sq(x, 339, c));

    // 7 segment display, polygons measured at 3x
    const LIT = '#ff0000', DIM = '#600000';
    const segs = {
      a: '1045,351 1140,351 1150,361 1138,372 1045,372 1035,361',
      b: '1153,364 1165,376 1160,462 1148,476 1140,462 1142,378',
      f: '1032,364 1042,374 1040,462 1030,474 1018,462 1022,376',
      g: '1042,466 1132,466 1145,477 1132,488 1042,488 1032,477',
      c: '1148,480 1160,492 1156,578 1144,590 1134,578 1138,492',
      e: '1028,480 1040,492 1034,578 1024,590 1014,578 1018,492',
      d: '1040,584 1130,584 1142,595 1130,606 1040,606 1028,595'
    };
    const digit = (off, lit) => {
      let g = `<g transform="translate(1210 250) scale(.3333) translate(${off} 0)">`;
      for (const k in segs) g += `<polygon points="${segs[k]}" fill="${lit.includes(k) ? LIT : DIM}"/>`;
      return g + `<circle cx="1165" cy="607" r="10" fill="${DIM}"/></g>`;
    };
    art += `<rect x="1524" y="344" width="171" height="136.500" fill="#808080" stroke="${RED}" stroke-width="2"/>`;
    art += `<rect x="1535" y="355" width="149" height="108" fill="#400000" stroke="${RED}" stroke-width="2"/><path d="M1610 355V463" stroke="${RED}" stroke-width="2"/>`;
    art += digit(0, 'abged') + digit(222, 'afgedc');
    art += `<text x="1537" y="476" font-size="12.500" font-weight="700" textLength="64" lengthAdjust="spacingAndGlyphs">ABCDEFG</text>`;
    art += `<text x="1610" y="476" font-size="12.500" font-weight="700" textLength="18" lengthAdjust="spacingAndGlyphs">DP</text>`;
    art += `<text x="1658" y="476" font-size="12.500" font-weight="700" textLength="15" lengthAdjust="spacingAndGlyphs">12</text>`;
    [1535, 1547, 1558, 1570, 1581, 1592, 1604, 1615, 1661, 1672].forEach(x => art += red(`M${x} 481V490`));
    [[1530, BLUE_SQ], [1541, RED_SQ], [1552, BLUE_SQ], [1564, BLUE_SQ], [1575, BLUE_SQ], [1587, BLUE_SQ], [1598, BLUE_SQ], [1609, RED_SQ], [1655, BLUE_SQ], [1666, RED_SQ]]
      .forEach(([x, c]) => art += sq(x, 492, c));

    // animation origin marker
    art += `<circle cx="954" cy="572" r="4" fill="none" stroke="#0000d0"/><path d="M947 572h14M954 565v14" stroke="#0000d0"/>`;
    document.getElementById('art').innerHTML = art;

    // overview of the whole sheet
    const mx = x => (72.3 + x * .0877).toFixed(1), my = y => (192 + y * .1).toFixed(1);
    const box = (x1, y1, x2, y2, fill) => `<rect x="${mx(x1)}" y="${my(y1)}" width="${(mx(x2) - mx(x1)).toFixed(1)}" height="${(my(y2) - my(y1)).toFixed(1)}" fill="${fill}" stroke="#000"/>`;
    let mini = `<path d="M98 210H216M98 298H216" stroke="#00c000" stroke-width="2"/>`;
    mini += `<path transform="matrix(.0877 0 0 .1 72.3 192)" d="${wires.join('')}" fill="none" stroke="#000" stroke-width="1.100" vector-effect="non-scaling-stroke"/>`;
    mini += box(977, 458, 1136, 766, 'none') + box(1296, 304, 1421, 332, '#dfdfcf') + box(1524, 344, 1695, 480, '#000');
    mini += `<path d="M209 226h4v6h-4zM209 234h4v4h-4z" fill="#ddd"/>`;
    mini += `<rect x="106" y="207" width="100" height="84" fill="none" stroke="#0000c0" stroke-width="1.300"/>`;
    document.getElementById('mini').innerHTML = mini;
  </script>
  <script src="https://cdn.jsdelivr.net/npm/bootstrap@5.3.2/dist/js/bootstrap.bundle.min.js"></script>
</body>
</html>
